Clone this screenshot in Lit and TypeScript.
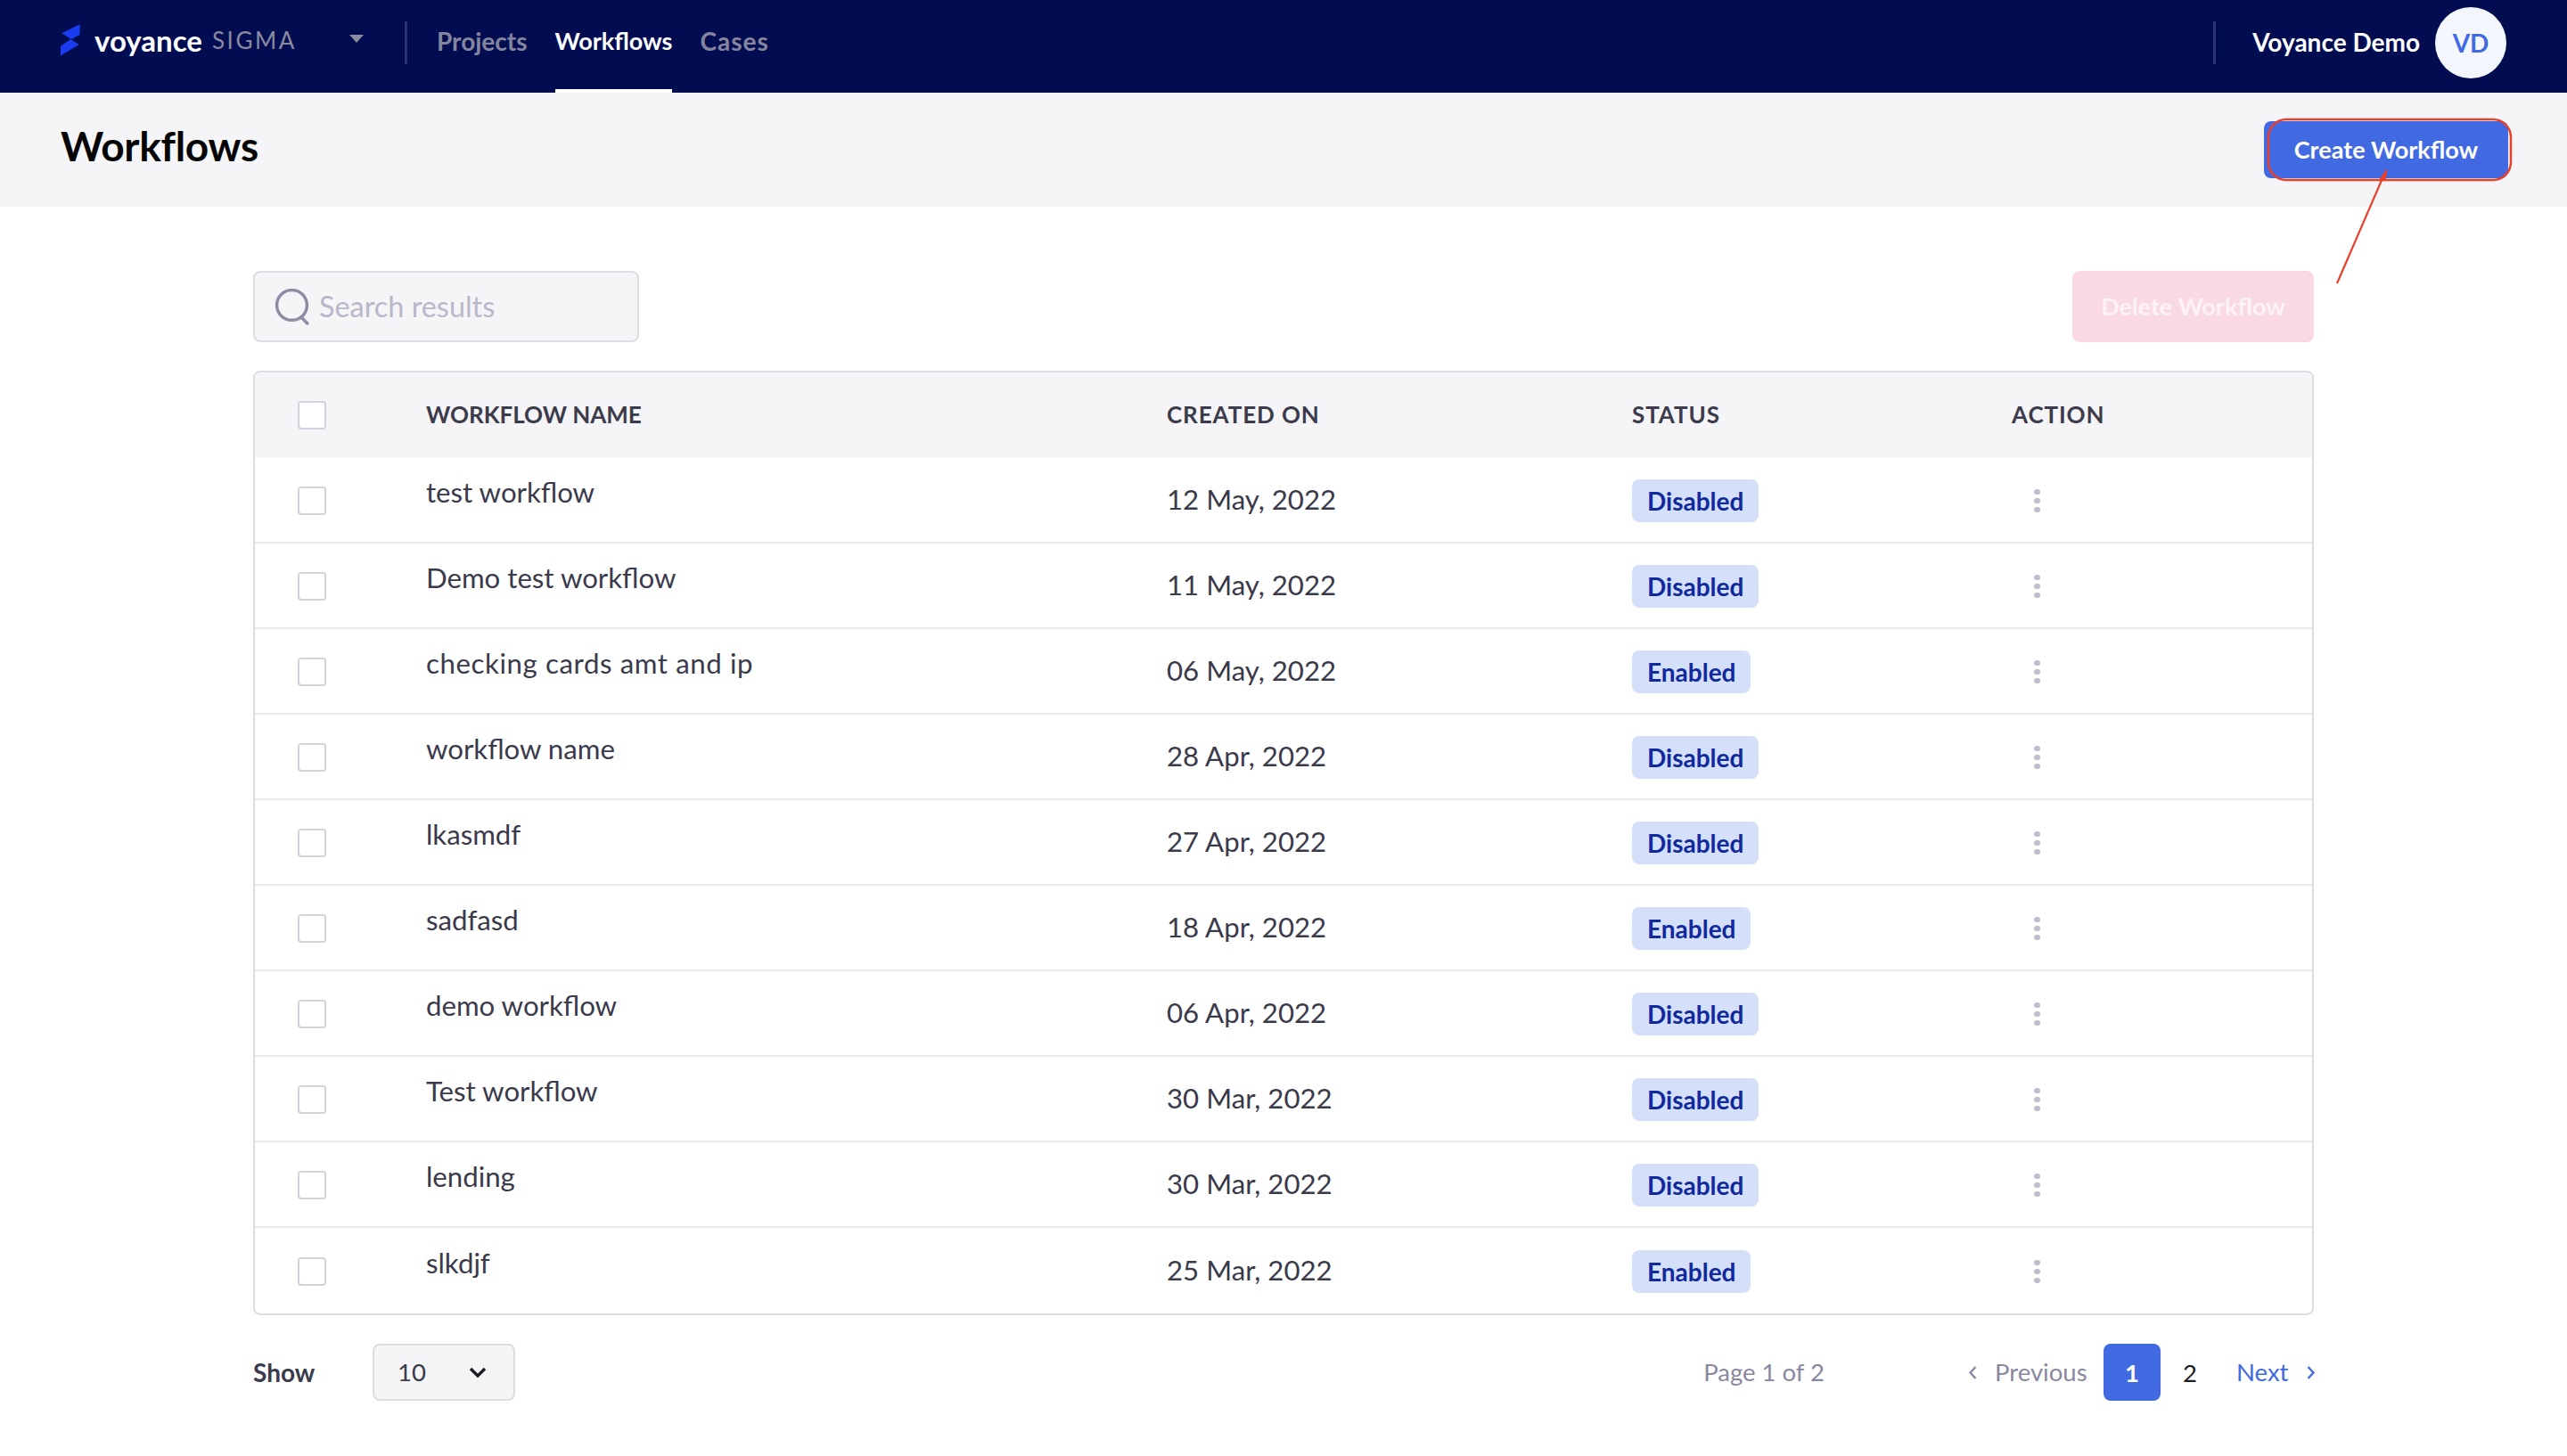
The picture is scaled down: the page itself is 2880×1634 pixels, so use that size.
import { LitElement, html, css, svg } from "lit";
import { customElement } from "lit/decorators.js";
import { classMap } from "lit/directives/class-map.js";

const rows = [
  ["test workflow", "12 May, 2022", "Disabled"],
  ["Demo test workflow", "11 May, 2022", "Disabled"],
  ["checking cards amt and ip", "06 May, 2022", "Enabled"],
  ["workflow name", "28 Apr, 2022", "Disabled"],
  ["lkasmdf", "27 Apr, 2022", "Disabled"],
  ["sadfasd", "18 Apr, 2022", "Enabled"],
  ["demo workflow", "06 Apr, 2022", "Disabled"],
  ["Test workflow", "30 Mar, 2022", "Disabled"],
  ["lending", "30 Mar, 2022", "Disabled"],
  ["slkdjf", "25 Mar, 2022", "Enabled"],
];

@customElement("app-root")
export class AppRoot extends LitElement {
  static styles = css`
    :host { display: block; position: relative; width: 2880px; height: 1634px; background: #fff; overflow: hidden;
      font-family: "Lato", "Liberation Sans", sans-serif; color: #3a3a4a; }
    * { box-sizing: border-box; }
    .nav { height: 104px; background: #020d51; display: flex; align-items: flex-start; padding-left: 68px; color: #fff; }
    .logo { width: 22px; height: 36px; margin-top: 27px; flex: none; display: block; }
    .brand { margin-left: 16px; width: 270px; height: 90px; display: flex; align-items: center; gap: 11px; position: relative; flex: none; }
    .brand b { font-size: 33px; font-weight: 700; color: #fff; }
    .brand span { font-size: 26px; letter-spacing: 2.6px; color: #8a8aa0; font-weight: 400; }
    .caret { width: 16px; height: 9px; position: absolute; left: 286px; top: 39px; }
    .spacer { width: 78px; flex: none; }
    .divider { width: 3px; height: 48px; background: #2c3570; margin-top: 24px; flex: none; }
    .links { display: flex; gap: 31px; margin-left: 33px; height: 104px; }
    .link { font-size: 28px; font-weight: 700; height: 104px; padding-top: 28px; color: #85859e; line-height: 36px; }
    .link.active { color: #fff; border-bottom: 4px solid #fff; font-size: 27px; }
    .link.cases { letter-spacing: 1px; }
    .user { margin-left: auto; display: flex; align-items: flex-start; padding-right: 68px; }
    .uname { font-size: 28px; font-weight: 700; margin: 0 17px 0 41px; line-height: 36px; padding-top: 29px; }
    .avatar { width: 80px; height: 80px; margin-top: 8px; border-radius: 50%; background: #f3f6fd; color: #4169e1; font-size: 28px;
      font-weight: 700; display: flex; align-items: center; justify-content: center; }
    .sub { height: 128px; background: #f5f5f7; display: flex; justify-content: space-between; padding: 32px 66px 0 68px; }
    h1 { margin: 3px 0 0; font-size: 46px; line-height: 50px; color: #050505; font-weight: 700; letter-spacing: -0.3px; }
    .btn { border-radius: 8px; color: #fff; font-size: 27px; font-weight: 700; display: flex; align-items: center; justify-content: center; }
    .create { width: 274px; height: 64px; background: #4169e1; padding-bottom: 1px; }
    .main { padding: 72px 284px 0 284px; }
    .tools { display: flex; justify-content: space-between; height: 80px; margin-bottom: 32px; }
    .search { width: 433px; height: 80px; background: #f5f5f7; border: 2px solid #dddce3; border-radius: 8px; display: flex; align-items: center; padding-left: 22px; gap: 9px; }
    .search svg { width: 41px; height: 41px; flex: none; }
    .search span { color: #b9b7c9; font-size: 32.4px; padding-bottom: 2px; }
    .delete { width: 271px; height: 80px; background: #f9dae2; color: #fdf2f5; padding-bottom: 2px; }
    .table { border: 2px solid #dddce3; border-radius: 8px; overflow: hidden; width: 2312px; }
    .row { display: grid; grid-template-columns: 192px 831px 522px 426px 1fr; height: 96px; align-items: center; border-bottom: 2px solid #ebebee; }
    .row:last-child { border-bottom: none; height: 96px; }
    .row.head { background: #f5f5f7; height: 96px; border-bottom: none; font-size: 26px; font-weight: 700; letter-spacing: 0.9px; color: #3c3b4b; }
    .row.head > div:not(.chk) { padding-bottom: 2px; }
    .row.head > .tight { letter-spacing: 0; }
    .row > .chk { width: 32px; height: 32px; border: 2px solid #d3d2dc; border-radius: 4px; margin-left: 48px; background: #fff; }
    .row:not(.head) > .chk { margin-top: 2px; }
    .name { font-size: 31.2px; padding-bottom: 18px; color: #3a3a4a; }
    .name.wide { letter-spacing: 0.6px; }
    .date { font-size: 31.2px; padding-bottom: 3px; color: #3a3a4a; }
    .badge { display: inline-flex; align-items: center; height: 48px; padding: 0 17px; border-radius: 8px; background: #d4e0fa; color: #10299c; font-size: 28px; font-weight: 700; margin-top: 2px; }
    .dots { display: flex; flex-direction: column; gap: 4px; width: 6px; margin-left: 25px; margin-top: 2px; }
    .dots i { width: 6.5px; height: 6px; border-radius: 50%; background: #bfbecd; display: block; }
    .foot { display: flex; align-items: center; height: 64px; margin-top: 32px; font-size: 27.5px; }
    .show { font-weight: 700; width: 134px; color: #3c3b4b; font-size: 28px; padding-bottom: 1px; }
    .select { width: 160px; height: 64px; background: #f5f5f7; border: 2px solid #dddce3; border-radius: 8px; display: flex; align-items: center; justify-content: space-between; padding: 0 30px 0 26px; }
    .select span { padding-bottom: 1px; }
    .select svg { width: 20px; height: 12px; }
    .pageof { margin-left: auto; color: #8a88a0; white-space: nowrap; padding-bottom: 1px; }
    .pager { display: flex; align-items: center; margin-left: 161px; width: 388px; color: #8a88a0; flex: none; }
    .chev { width: 10px; height: 17px; flex: none; }
    .prev { margin: 0 16px 0 20px; width: 106px; white-space: nowrap; flex: none; padding-bottom: 1px; }
    .cur { width: 64px; height: 64px; border-radius: 8px; background: #4169e1; color: #fff; display: flex; align-items: center; justify-content: center; font-weight: 700; flex: none; }
    .two { color: #1c1c24; width: 66px; text-align: center; flex: none; }
    .next { color: #4169e1; margin: 0 20px 0 19px; width: 59px; white-space: nowrap; flex: none; padding-bottom: 1px; }
    .mark { position: absolute; left: 0; top: 0; width: 2880px; height: 340px; pointer-events: none; }
  `;

  render() {
    return html`
      <div class="nav">
        <svg class="logo" viewBox="0 0 22 36"><path fill="#1a3cf0" d="M1.3 10.3 21.5.3V12L12 17ZM0 24.7 11.3 17l9.4 6L0 35.5Z"/></svg>
        <div class="brand"><b>voyance</b><span>SIGMA</span>
          <svg class="caret" viewBox="0 0 16 9"><path fill="#8a8aa0" d="M0 0h16L8 9Z"/></svg>
        </div>
        <div class="spacer"></div>
        <div class="divider"></div>
        <div class="links">
          <div class="link">Projects</div>
          <div class="link active">Workflows</div>
          <div class="link cases">Cases</div>
        </div>
        <div class="user">
          <div class="divider"></div>
          <div class="uname">Voyance Demo</div>
          <div class="avatar">VD</div>
        </div>
      </div>
      <div class="sub">
        <h1>Workflows</h1>
        <div class="btn create">Create Workflow</div>
      </div>
      <div class="main">
        <div class="tools">
          <div class="search">
            <svg viewBox="0 0 40 40" fill="none" stroke="#8f8da5" stroke-width="3.4"><circle cx="19" cy="18" r="16.5"/><path d="m29 31 7 7" stroke-linecap="round"/></svg>
            <span>Search results</span>
          </div>
          <div class="btn delete">Delete Workflow</div>
        </div>
        <div class="table">
          <div class="row head">
            <div class="chk"></div><div class="tight">WORKFLOW NAME</div><div>CREATED ON</div><div>STATUS</div><div>ACTION</div>
          </div>
          ${rows.map((r) => html`
            <div class="row">
              <div class="chk"></div>
              <div class=${classMap({ name: true, wide: r[0].length > 20 })}>${r[0]}</div>
              <div class="date">${r[1]}</div>
              <div><span class="badge">${r[2]}</span></div>
              <div class="dots"><i></i><i></i><i></i></div>
            </div>`)}
        </div>
        <div class="foot">
          <div class="show">Show</div>
          <div class="select"><span>10</span>
            <svg viewBox="0 0 20 12" fill="none" stroke="#1c1c24" stroke-width="3.4"><path d="m2 2 8 8 8-8"/></svg>
          </div>
          <div class="pageof">Page 1 of 2</div>
          <div class="pager">
            <svg class="chev" viewBox="0 0 10 17" fill="none" stroke="#8a88a0" stroke-width="2.4"><path d="M8.5 2 2.5 8.5l6 6.5"/></svg>
            <span class="prev">Previous</span>
            <div class="cur">1</div>
            <div class="two">2</div>
            <span class="next">Next</span>
            <svg class="chev" viewBox="0 0 10 17" fill="none" stroke="#4169e1" stroke-width="2.4"><path d="m1.5 2 6 6.5-6 6.5"/></svg>
          </div>
        </div>
      </div>
      <svg class="mark" viewBox="0 0 2880 340" fill="none">
        ${svg`<rect x="2545" y="134" width="272" height="68" rx="20" stroke="#e8402a" stroke-width="2.5"/>
        <path d="M2622 318 2673 200" stroke="#e8402a" stroke-width="2.2"/>
        <path d="M2678 190 2670 201 2676 203Z" fill="#e8402a" stroke="#e8402a"/>`}
      </svg>
    `;
  }
}
